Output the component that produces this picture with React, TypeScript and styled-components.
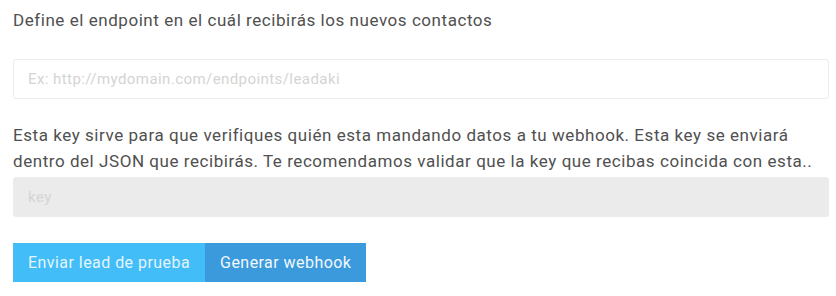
import React from "react";
import styled, { createGlobalStyle } from "styled-components";

const Global = createGlobalStyle`
  html, body { margin: 0; padding: 0; background: #fff; }
  body { font-family: Roboto, "Liberation Sans", Arial, sans-serif; }
  * { box-sizing: border-box; }
`;

const Page = styled.div`
  padding: 7px 7px 0 13px;
  display: flex;
  flex-direction: column;
`;

const Label = styled.p<{ $mt?: number; $mb?: number }>`
  margin: ${(p) => p.$mt ?? 0}px 0 ${(p) => p.$mb ?? 0}px 0;
  font-size: 17px;
  letter-spacing: 0.55px;
  line-height: 26px;
  color: #505050;
`;

const Input = styled.input<{ $disabled?: boolean }>`
  display: block;
  width: 100%;
  height: 40px;
  padding: 0 14px;
  font-family: Roboto, "Liberation Sans", Arial, sans-serif;
  font-size: 15px;
  letter-spacing: 0.43px;
  color: #555;
  border: 1px solid ${(p) => (p.$disabled ? "#ebebeb" : "#ececec")};
  background: ${(p) => (p.$disabled ? "#ebebeb" : "#fff")};
  border-radius: 3px;
  outline: none;
  &::placeholder { color: #d4d4d4; }
`;

const ButtonRow = styled.div`
  display: flex;
  margin-top: 26px;
`;

const Button = styled.button<{ $variant: "light" | "dark" }>`
  height: 39px;
  padding: 0 15px;
  border: none;
  font-family: Roboto, "Liberation Sans", Arial, sans-serif;
  font-size: 16px;
  letter-spacing: 0.45px;
  color: ${(p) => (p.$variant === "light" ? "#e3f5fe" : "#f2f8fd")};
  background: ${(p) => (p.$variant === "light" ? "#42bdf8" : "#3a9adb")};
  cursor: pointer;
`;

export default function App() {
  return (
    <>
      <Global />
      <Page>
        <Label $mb={26}>Define el endpoint en el cuál recibirás los nuevos contactos</Label>
        <Input placeholder="Ex: http://mydomain.com/endpoints/leadaki" />
        <Label $mt={23} $mb={3}>
          Esta key sirve para que verifiques quién esta mandando datos a tu webhook. Esta key se enviará dentro del JSON que recibirás. Te recomendamos validar que la key que recibas coincida con esta..
        </Label>
        <Input $disabled placeholder="key" disabled />
        <ButtonRow>
          <Button $variant="light">Enviar lead de prueba</Button>
          <Button $variant="dark">Generar webhook</Button>
        </ButtonRow>
      </Page>
    </>
  );
}
